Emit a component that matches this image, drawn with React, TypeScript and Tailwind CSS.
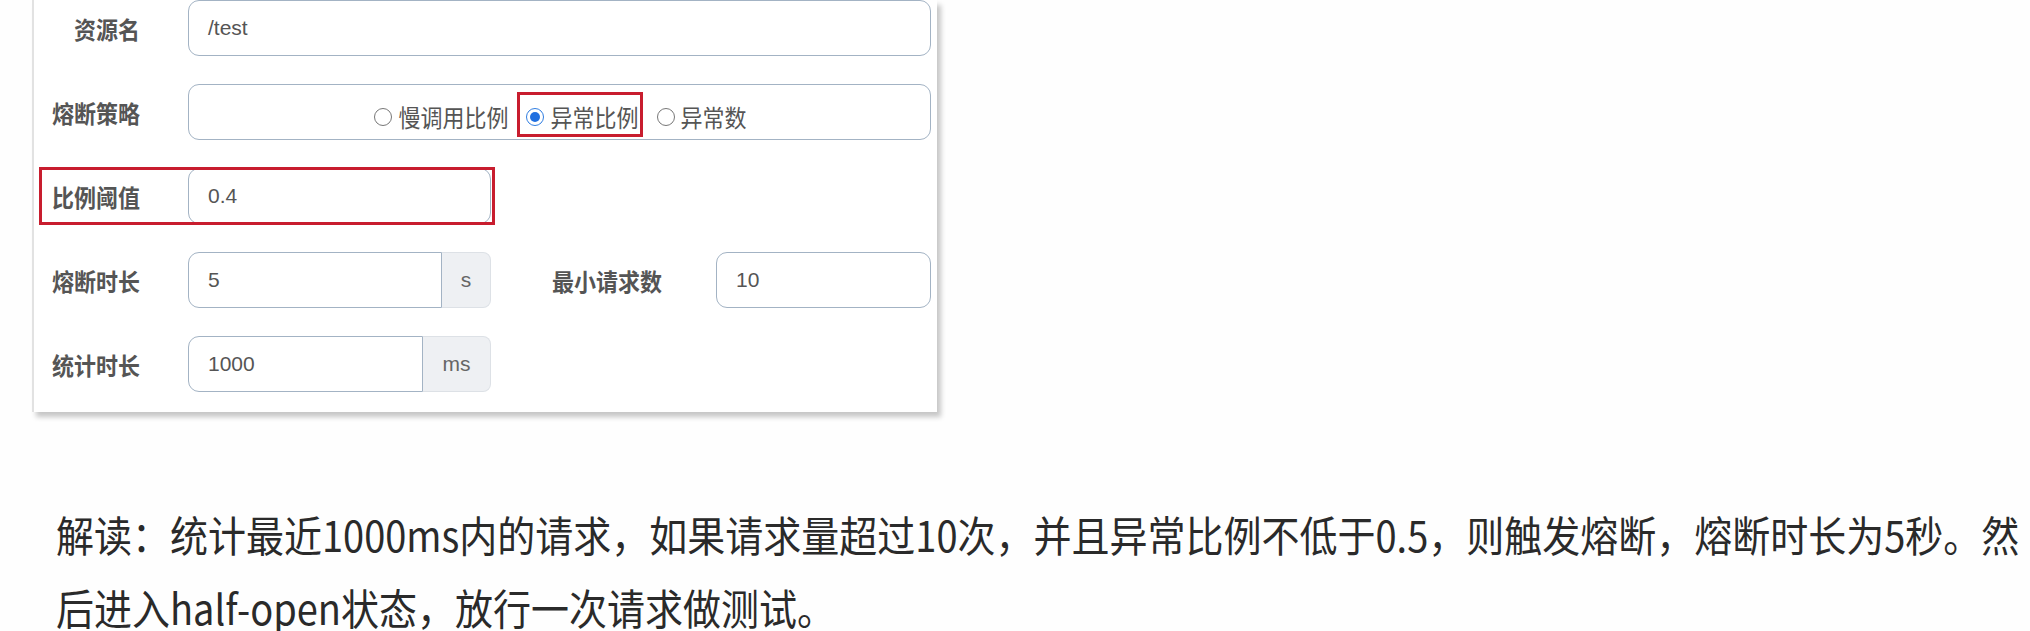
import type { ReactNode } from "react";

const LABEL =
  "origin-center scale-y-[1.1] text-[22px] font-bold text-[#555] [font-family:'Noto_Sans_CJK_SC',sans-serif]";
const INPUT =
  "flex h-[56px] items-center border-[1.5px] border-[#a3b3c4] bg-white pl-[19px] text-[21px] text-[#555] [font-family:'Liberation_Sans',Arial,sans-serif]";

function Label({ children, className = "" }: { children: ReactNode; className?: string }) {
  return <div className={`${LABEL} ${className}`}>{children}</div>;
}

function Radio({ label, checked = false }: { label: string; checked?: boolean }) {
  return (
    <span className="flex items-center gap-[6px]">
      <span
        className={[
          "grid size-[18px] place-items-center rounded-full border-[1.5px] bg-white",
          checked ? "border-[#2f7de1]" : "border-[#777]",
        ].join(" ")}
      >
        {checked && <span className="size-[10px] rounded-full bg-[#1f6fe0]" />}
      </span>
      <span className="scale-y-[1.08] text-[22px] text-[#555] [font-family:'Noto_Sans_CJK_SC',sans-serif]">
        {label}
      </span>
    </span>
  );
}

export default function App() {
  return (
    <div className="relative h-[631px] w-[2030px] overflow-hidden bg-[#fefefe]">
      {/* form card, top is cut off by the screenshot */}
      <div className="ml-[32px] w-[905px] border-l-2 border-[#e2e2e2] bg-white pb-[20px] pr-[6px] shadow-[4px_5px_5px_rgba(0,0,0,0.22)]">
        <div className="flex flex-col gap-[28px]">
          {/* 资源名 */}
          <div className="flex items-center gap-[48px]">
            <Label className="w-[106px] text-right">资源名</Label>
            <div className={`${INPUT} flex-1 rounded-[11px]`}>/test</div>
          </div>

          {/* 熔断策略 */}
          <div className="flex items-center gap-[48px]">
            <Label className="w-[106px] text-right">熔断策略</Label>
            <div className="flex h-[56px] flex-1 items-center justify-center gap-[18px] rounded-[11px] border-[1.5px] border-[#a3b3c4] pt-[9px] pl-[2px]">
              <Radio label="慢调用比例" />
              <span className="relative">
                <Radio label="异常比例" checked />
                <span className="absolute -top-[8px] -right-[4px] -bottom-[4px] -left-[9px] border-[3px] border-[#c81d2e]" />
              </span>
              <Radio label="异常数" />
            </div>
          </div>

          {/* 比例阈值 */}
          <div className="relative flex items-center gap-[48px]">
            <Label className="w-[106px] text-right">比例阈值</Label>
            <div className={`${INPUT} w-[303px] rounded-[11px]`}>0.4</div>
            <span className="absolute -top-[1px] left-[5px] h-[58px] w-[456px] border-[3px] border-[#c81d2e]" />
          </div>

          {/* 熔断时长 / 最小请求数 */}
          <div className="flex items-center gap-[48px]">
            <Label className="w-[106px] text-right">熔断时长</Label>
            <div className="flex w-[303px]">
              <div className={`${INPUT} flex-1 rounded-l-[11px]`}>5</div>
              <div className="flex h-[56px] w-[49px] items-center justify-center rounded-r-[8px] border border-l-0 border-[#dde1e6] bg-[#eef0f3] text-[21px] text-[#666] [font-family:'Liberation_Sans',Arial,sans-serif]">
                s
              </div>
            </div>
            <div className="ml-[13px] flex flex-1 items-center gap-[54px]">
              <Label>最小请求数</Label>
              <div className={`${INPUT} flex-1 rounded-[11px]`}>10</div>
            </div>
          </div>

          {/* 统计时长 */}
          <div className="flex items-center gap-[48px]">
            <Label className="w-[106px] text-right">统计时长</Label>
            <div className="flex w-[303px]">
              <div className={`${INPUT} flex-1 rounded-l-[11px]`}>1000</div>
              <div className="flex h-[56px] w-[68px] items-center justify-center rounded-r-[8px] border border-l-0 border-[#dde1e6] bg-[#eef0f3] text-[21px] text-[#666] [font-family:'Liberation_Sans',Arial,sans-serif]">
                ms
              </div>
            </div>
          </div>
        </div>
      </div>

      {/* explanation */}
      <div className="mt-[84px] pl-[56px] text-[38px] text-[#2a2a2a] [font-family:'Noto_Sans_CJK_SC',sans-serif]">
        <p className="origin-left scale-y-[1.1] whitespace-nowrap leading-[75px]">
          解读：统计最近1000ms内的请求，如果请求量超过10次，并且异常比例不低于0.5，则触发熔断，熔断时长为5秒。然
        </p>
        <p className="mt-[15px] origin-left scale-y-[1.1] whitespace-nowrap leading-[42px]">
          后进入half-open状态，放行一次请求做测试。
        </p>
      </div>
    </div>
  );
}
